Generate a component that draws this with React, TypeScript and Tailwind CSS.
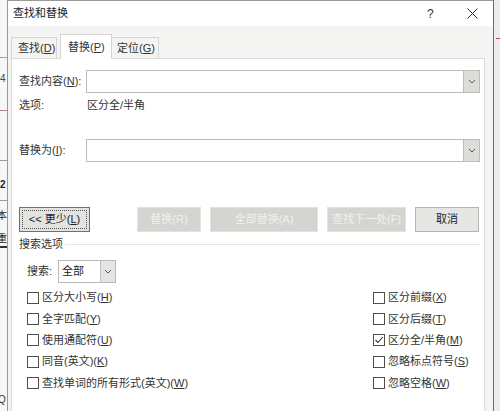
import React from "react";

const F = { fontFamily: '"Liberation Sans", "Noto Sans CJK SC", sans-serif' };

function U({ c }: { c: string }) {
  return <span className="underline underline-offset-[1px]">{c}</span>;
}

function Chevron() {
  return (
    <svg width="8" height="5" viewBox="0 0 8 5">
      <path d="M1 1 L4 4 L7 1" fill="none" stroke="#555" strokeWidth="1" />
    </svg>
  );
}

function Combo() {
  return (
    <div className="flex-1 h-[23px] flex border border-[#bdbdbb] bg-white">
      <div className="flex-1" />
      <div className="w-[16px] h-full bg-[#dcdcd8] border-l border-[#bdbdb9] flex items-center justify-center">
        <Chevron />
      </div>
    </div>
  );
}

function Check({ label, k, checked }: { label: string; k: string; checked?: boolean }) {
  return (
    <div className="h-[21.3px] flex items-center whitespace-nowrap">
      <div className="w-[12px] h-[12px] border border-[#4d4d4d] bg-white flex items-center justify-center">
        {checked && (
          <svg width="10" height="10" viewBox="0 0 10 10">
            <path d="M1.5 5 L4 7.5 L8.8 2" fill="none" stroke="#333" strokeWidth="1.1" />
          </svg>
        )}
      </div>
      <span className="ml-[3px] text-[11px] text-[#333]">
        {label}(<U c={k} />)
      </span>
    </div>
  );
}

function DisabledBtn({ w, children }: { w: string; children: React.ReactNode }) {
  return (
    <div
      className={`${w} h-[25px] bg-[#d4d4d0] border border-[#e2e2df] flex items-center justify-center text-[11px] text-[#f0f0ee] whitespace-nowrap`}
    >
      {children}
    </div>
  );
}

export default function App() {
  return (
    <div className="w-[500px] h-[411px] flex overflow-hidden bg-white" style={F}>
      {/* left background strip */}
      <div className="w-[8px] h-full relative bg-[#f7f7f7] border-r border-[#9a9a9a] overflow-hidden">
        <div className="absolute left-0 right-0 top-[57px] h-px bg-[#b99]" />
        <div className="absolute left-0 right-0 top-[110px] h-px bg-[#a88]" />
        <div className="absolute left-0 right-0 top-[160px] h-px bg-[#999]" />
        <div className="absolute left-0 right-0 top-[200px] h-px bg-[#999]" />
        <div className="absolute left-0 right-0 top-[246px] h-[2px] bg-[#333]" />
        <div className="absolute left-0 top-[74px] text-[10px] leading-none text-[#444]">4</div>
        <div className="absolute left-0 top-[180px] text-[10px] leading-none font-bold text-[#222]">2</div>
        <div className="absolute left-[-3px] top-[211px] text-[10px] leading-none text-[#222]">本</div>
        <div className="absolute left-[-3px] top-[234px] text-[10px] leading-none text-[#222]">重</div>
        <div className="absolute left-[-2px] top-[395px] text-[10px] leading-none text-[#333]">Q</div>
      </div>

      {/* dialog */}
      <div className="flex-1 h-full flex flex-col bg-[#f4f4f2] border-t border-[#9b9b9b]">
        {/* title bar */}
        <div className="h-[25px] bg-white flex items-center pl-[5px] text-[11px] text-[#222]">
          <span className="flex-1">查找和替换</span>
          <span className="w-[12px] text-[12px] text-[#333]">?</span>
          <span className="w-[28px]" />
          <svg width="11" height="11" viewBox="0 0 11 11" className="mr-[15px]">
            <path d="M0.5 0.5 L10.5 10.5 M10.5 0.5 L0.5 10.5" stroke="#333" strokeWidth="1" />
          </svg>
        </div>

        {/* body */}
        <div className="flex-1 flex flex-col pl-[3px] pr-[8px]">
          {/* tabs */}
          <div className="h-[32px] flex items-end whitespace-nowrap">
            <div className="h-[21px] w-[46px] border border-b-0 border-[#d5d5d3] bg-[#f4f4f2] flex items-center pl-[6px] text-[11px] text-[#333]">
              查找(<U c="D" />)
            </div>
            <div className="w-[3px]" />
            <div className="h-[25px] w-[52px] border border-b-0 border-[#d5d5d3] bg-white flex items-center pl-[7px] text-[11px] text-[#333] relative top-px z-10">
              替换(<U c="P" />)
            </div>
            <div className="h-[21px] w-[47px] border border-b-0 border-l-0 border-[#d5d5d3] bg-[#f4f4f2] flex items-center pl-[5px] text-[11px] text-[#333]">
              定位(<U c="G" />)
            </div>
          </div>

          {/* panel */}
          <div className="flex-1 bg-white border border-[#dadad8] border-b-0 pt-[11px] pl-[7px] pr-[4px] flex flex-col">
            <div className="flex items-center h-[23px]">
              <span className="w-[67px] text-[11px] text-[#333] whitespace-nowrap">
                查找内容(<U c="N" />):
              </span>
              <Combo />
            </div>
            <div className="flex items-center h-[16px] mt-[4px] text-[11px] text-[#333]">
              <span className="w-[68px]">选项:</span>
              <span>区分全/半角</span>
            </div>
            <div className="flex items-center h-[23px] mt-[26px]">
              <span className="w-[67px] text-[11px] text-[#333] whitespace-nowrap">
                替换为(<U c="I" />):
              </span>
              <Combo />
            </div>

            {/* buttons */}
            <div className="flex items-center h-[25px] mt-[45px]">
              <div className="w-[71px] h-[25px] border border-[#3d7cb6] bg-[#e3e3e1] p-[2px]">
                <div className="w-full h-full border border-dotted border-[#555] flex items-center justify-center text-[11px] text-[#222] whitespace-nowrap">
                  &lt;&lt; 更少(<U c="L" />)
                </div>
              </div>
              <div className="w-[47px]" />
              <DisabledBtn w="w-[64px]">替换(R)</DisabledBtn>
              <div className="w-[9px]" />
              <DisabledBtn w="w-[108px]">全部替换(A)</DisabledBtn>
              <div className="w-[9px]" />
              <DisabledBtn w="w-[79px]">查找下一处(F)</DisabledBtn>
              <div className="w-[9px]" />
              <div className="w-[64px] h-[25px] bg-[#e6e6e4] border border-[#b4b4b2] flex items-center justify-center text-[11px] text-[#222]">
                取消
              </div>
            </div>

            {/* search options header */}
            <div className="flex items-center h-[14px] mt-[5px]">
              <span className="text-[11px] text-[#333] mr-[2px]">搜索选项</span>
              <div className="flex-1 h-px bg-[#e6e6e4]" />
            </div>

            {/* search select */}
            <div className="flex items-center h-[23px] mt-[9px] pl-[8px]">
              <span className="text-[11px] text-[#333] w-[31px]">搜索:</span>
              <div className="w-[58px] h-[23px] border border-[#b8b8b6] flex bg-white">
                <span className="flex-1 flex items-center pl-[3px] text-[11px] text-[#222]">全部</span>
                <div className="w-[15px] h-full bg-[#e4e4e2] border-l border-[#c0c0be] flex items-center justify-center">
                  <Chevron />
                </div>
              </div>
            </div>

            {/* checkboxes */}
            <div className="flex mt-[4px]">
              <div className="flex-1 flex flex-col pl-[8px]">
                <Check label="区分大小写" k="H" />
                <Check label="全字匹配" k="Y" />
                <Check label="使用通配符" k="U" />
                <Check label="同音(英文)" k="K" />
                <Check label="查找单词的所有形式(英文)" k="W" />
              </div>
              <div className="w-[107px] flex flex-col">
                <Check label="区分前缀" k="X" />
                <Check label="区分后缀" k="T" />
                <Check label="区分全/半角" k="M" checked />
                <Check label="忽略标点符号" k="S" />
                <Check label="忽略空格" k="W" />
              </div>
            </div>
          </div>
        </div>
      </div>

      {/* right background strip */}
      <div className="w-[7px] h-full relative bg-[#ececec] border-l border-[#6a6a6a]">
        <div className="absolute left-[2px] top-[38px] w-[5px] h-px bg-[#c44]" />
      </div>
    </div>
  );
}
